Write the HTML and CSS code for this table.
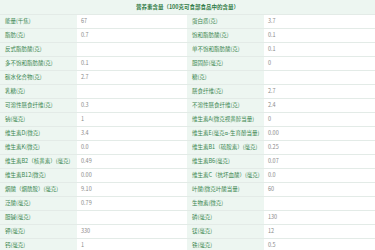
FILE: index.html
```html
<!DOCTYPE html>
<html lang="zh">
<head>
<meta charset="utf-8">
<link rel="stylesheet" href="styles.css">
</head>
<body>
<table class="nutri">
  <colgroup>
    <col class="c-label"><col class="c-val"><col class="c-label"><col class="c-val2">
  </colgroup>
  <thead>
    <tr><th colspan="4" class="head">营养素含量（100克可食部食品中的含量）</th></tr>
  </thead>
  <tbody>
    <tr><td class="k">能量(千焦)</td><td class="v">67</td><td class="k">蛋白质(克)</td><td class="v">3.7</td></tr>
    <tr><td class="k">脂肪(克)</td><td class="v">0.7</td><td class="k">饱和脂肪酸(克)</td><td class="v">0.1</td></tr>
    <tr><td class="k">反式脂肪酸(克)</td><td class="v"></td><td class="k">单不饱和脂肪酸(克)</td><td class="v">0.1</td></tr>
    <tr><td class="k">多不饱和脂肪酸(克)</td><td class="v">0.1</td><td class="k">胆固醇(毫克)</td><td class="v">0</td></tr>
    <tr><td class="k">碳水化合物(克)</td><td class="v">2.7</td><td class="k">糖(克)</td><td class="v"></td></tr>
    <tr><td class="k">乳糖(克)</td><td class="v"></td><td class="k">膳食纤维(克)</td><td class="v">2.7</td></tr>
    <tr><td class="k">可溶性膳食纤维(克)</td><td class="v">0.3</td><td class="k">不溶性膳食纤维(克)</td><td class="v">2.4</td></tr>
    <tr><td class="k">钠(毫克)</td><td class="v">1</td><td class="k">维生素A(微克视黄醇当量)</td><td class="v">0</td></tr>
    <tr><td class="k">维生素D(微克)</td><td class="v">3.4</td><td class="k">维生素E(毫克α-生育酚当量)</td><td class="v">0.00</td></tr>
    <tr><td class="k">维生素K(微克)</td><td class="v">0.0</td><td class="k">维生素B1（硫胺素）(毫克)</td><td class="v">0.25</td></tr>
    <tr><td class="k">维生素B2（核黄素）(毫克)</td><td class="v">0.49</td><td class="k">维生素B6(毫克)</td><td class="v">0.07</td></tr>
    <tr><td class="k">维生素B12(微克)</td><td class="v">0.00</td><td class="k">维生素C（抗坏血酸）(毫克)</td><td class="v">0.0</td></tr>
    <tr><td class="k">烟酸（烟酰胺）(毫克)</td><td class="v">9.10</td><td class="k">叶酸(微克叶酸当量)</td><td class="v">60</td></tr>
    <tr><td class="k">泛酸(毫克)</td><td class="v">0.79</td><td class="k">生物素(微克)</td><td class="v"></td></tr>
    <tr><td class="k">胆碱(毫克)</td><td class="v"></td><td class="k">磷(毫克)</td><td class="v">130</td></tr>
    <tr><td class="k">钾(毫克)</td><td class="v">330</td><td class="k">镁(毫克)</td><td class="v">12</td></tr>
    <tr><td class="k">钙(毫克)</td><td class="v">1</td><td class="k">铁(毫克)</td><td class="v">0.5</td></tr>
  </tbody>
</table>
</body>
</html>
```

FILE: styles.css
```css
html, body {
  margin: 0;
  padding: 0;
  background: #ffffff;
}
body {
  font-family: "Noto Sans CJK SC", "Liberation Sans", sans-serif;
  font-size: 5.5px;
}
.nutri {
  width: 375px;
  border-collapse: collapse;
  table-layout: fixed;
}
.c-label { width: 77px; }
.c-val { width: 110px; }
.c-val2 { width: 111px; }
.head {
  height: 14px;
  padding: 0;
  background: #edf6f1;
  color: #2f7a45;
  font-weight: bold;
  text-align: center;
  border-bottom: 1px solid #e3ebe7;
}
.nutri td {
  height: 13px;
  padding: 0 0 0 5px;
  border-bottom: 1px solid #e3ebe7;
  white-space: nowrap;
  overflow: hidden;
  line-height: 13px;
}
.k {
  background: #edf6f1;
  color: #3a8650;
}
.v {
  background: #ffffff;
  color: #8a8a8a;
}
td.v { padding-left: 4px; }
```
